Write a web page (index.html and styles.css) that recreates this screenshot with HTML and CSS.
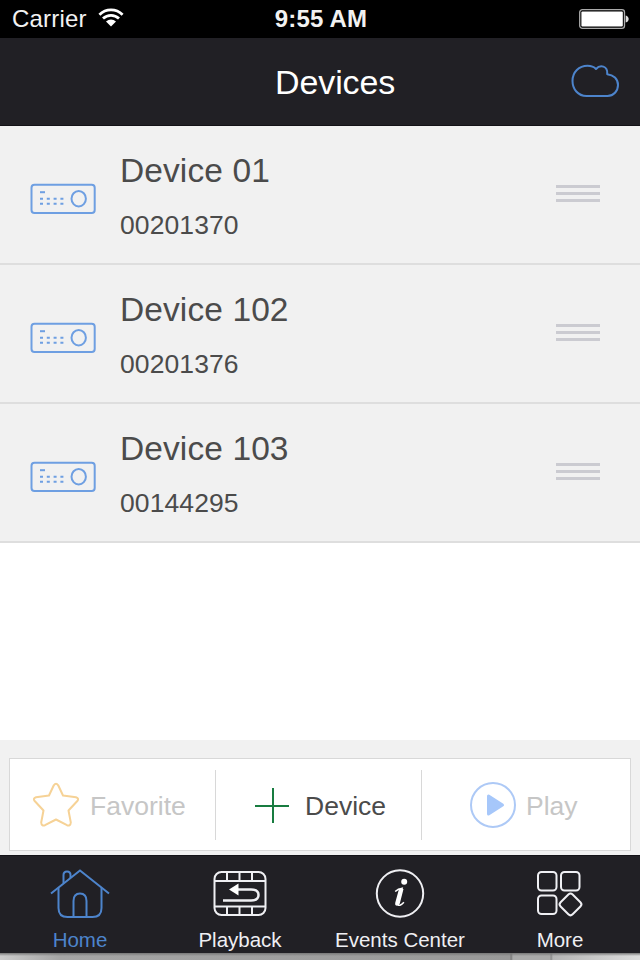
FILE: index.html
```html
<!DOCTYPE html>
<html lang="en">
<head>
    <meta charset="UTF-8">
    <meta name="viewport" content="width=device-width, initial-scale=1.0">
    <title>Devices</title>
    <link rel="stylesheet" href="styles.css">
</head>
<body>
    <!-- shared icons -->
    <svg class="symbols" width="0" height="0">
        <symbol id="dvr" viewBox="0 0 66 32">
            <g fill="none" stroke="#6e9fe2" stroke-width="2">
                <rect x="1.5" y="1.700" width="63.200" height="28.200" rx="3"/>
                <ellipse cx="48.700" cy="15.700" rx="7.200" ry="7.700"/>
                <path d="M10 9.200h5"/>
                <path d="M10 15.700h24M10 20.800h24" stroke-dasharray="3 3.800"/>
            </g>
        </symbol>
    </svg>

    <div class="app">
        <div class="status-bar">
            <div class="carrier">
                <span>Carrier</span>
                <svg class="wifi" width="26" height="20" viewBox="0 0 26 20">
                    <g fill="none" stroke="#fff" stroke-width="2.800">
                        <path d="M1.400 6.700C8 .3 18 .3 24.600 6.700"/>
                        <path d="M5 10.600c4.600-4.400 11.400-4.400 16 0"/>
                    </g>
                    <path d="M8 13.500c3-2.700 7-2.700 10 0l-5 5z" fill="#fff"/>
                </svg>
            </div>
            <div class="clock">9:55 AM</div>
            <svg class="battery" width="51" height="21" viewBox="0 0 51 21">
                <rect x=".7" y=".7" width="44.800" height="18.600" rx="2.600" fill="none" stroke="#aaa" stroke-width="1.300"/>
                <rect x="2.400" y="2.400" width="41.400" height="15.200" rx="1" fill="#fff"/>
                <path d="M46.700 6.500c4 1 4 6 0 7z" fill="#ddd"/>
            </svg>
        </div>

        <div class="nav-bar">
            <h1>Devices</h1>
            <svg class="cloud" width="48" height="34" viewBox="0 0 48 34">
                <path d="M15.500 32C7 32 1.500 25 1.500 17 1.500 8 8 1.800 16.500 1.800c3.500 0 6.500 1 8.500 3.200C29 .5 37 1.500 36.200 10.200 42.500 10.800 47 15 47 21c0 6-4.500 11-10.500 11z" fill="none" stroke="#4d84cc" stroke-width="2" stroke-linejoin="round"/>
            </svg>
        </div>

        <div class="device-list">
            <div class="device">
                <svg class="device-icon" width="66" height="32"><use href="#dvr"/></svg>
                <div class="device-info">
                    <div class="device-name">Device 01</div>
                    <div class="device-id">00201370</div>
                </div>
                <div class="handle"><i></i><i></i><i></i></div>
            </div>
            <div class="device">
                <svg class="device-icon" width="66" height="32"><use href="#dvr"/></svg>
                <div class="device-info">
                    <div class="device-name">Device 102</div>
                    <div class="device-id">00201376</div>
                </div>
                <div class="handle"><i></i><i></i><i></i></div>
            </div>
            <div class="device">
                <svg class="device-icon" width="66" height="32"><use href="#dvr"/></svg>
                <div class="device-info">
                    <div class="device-name">Device 103</div>
                    <div class="device-id">00144295</div>
                </div>
                <div class="handle"><i></i><i></i><i></i></div>
            </div>
        </div>

        <div class="toolbar">
            <div class="actions">
                <div class="action favorite">
                    <svg width="48" height="46" viewBox="0 0 48 46">
                        <path d="M21.800 3.300Q24 .2 26.200 3.300L31 13.500 44 15.200Q47.500 16.300 45.300 19L36.500 28.500 38.800 40.500Q38.500 44.300 35 43.200L24 37.500 13 43.200Q9.500 44.300 9.200 40.500L11.500 28.500 2.700 19Q.5 16.300 4 15.200L17 13.500z" fill="none" stroke="#f6d296" stroke-width="2" stroke-linejoin="round"/>
                    </svg>
                    <span>Favorite</span>
                </div>
                <div class="action add">
                    <svg width="34" height="36" viewBox="0 0 34 36">
                        <path d="M0 19h34M18 1v35" stroke="#187c40" stroke-width="2"/>
                    </svg>
                    <span>Device</span>
                </div>
                <div class="action play">
                    <svg width="46" height="46" viewBox="0 0 46 46">
                        <circle cx="23" cy="23" r="22" fill="none" stroke="#adc9f6" stroke-width="2"/>
                        <path d="M18.500 14v18L32.500 23z" fill="#a6c7fa" stroke="#a6c7fa" stroke-width="3" stroke-linejoin="round"/>
                    </svg>
                    <span>Play</span>
                </div>
            </div>
        </div>

        <div class="tab-bar">
            <div class="tab active">
                <svg width="60" height="52" viewBox="0 0 60 52">
                    <g fill="none" stroke="#4d84cc" stroke-width="2">
                        <path d="M1 26.500L30 3.500l29 23"/>
                        <path d="M8.500 21v20q0 9 9 9h25q9 0 9-9V21"/>
                        <path d="M13.500 16V8q0-3.500 3.500-3.500T20.500 8v3"/>
                        <path d="M23.500 50V34q0-7.500 6.500-7.500T36.500 34v16"/>
                    </g>
                </svg>
                <span>Home</span>
            </div>
            <div class="tab">
                <svg width="54" height="52" viewBox="0 0 54 52">
                    <g fill="none" stroke="#efeff3" stroke-width="2">
                        <rect x="1.500" y="5" width="51" height="43" rx="7"/>
                        <path d="M2 14h50M2 39.500h50M14 5v9M26.500 5v9M39 5v9M14 39.500V48M26.500 39.500V48M39 39.500V48"/>
                        <path d="M24 22.500h14q7.500 0 7.500 5.500t-7.500 5.500H10" stroke-width="2.500"/>
                    </g>
                    <path d="M16 22.500l9.500-6v12z" fill="#fff"/>
                </svg>
                <span>Playback</span>
            </div>
            <div class="tab">
                <svg width="50" height="52" viewBox="0 0 50 52">
                    <circle cx="25" cy="26.500" r="23.200" fill="none" stroke="#efeff3" stroke-width="2"/>
                    <circle cx="29.200" cy="14.800" r="3" fill="#fff"/>
                    <path d="M20.200 24.500q3-3 7-3.300l-3.800 14.600q-.8 3.200 1.500 2.400 2-.7 4-3" fill="none" stroke="#fff" stroke-width="1.500"/>
                    <path d="M24 22h4.500L24.800 36.500q-.5 2.300-2.700 2.300-2.500 0-1.800-3.300z" fill="#fff"/>
                </svg>
                <span>Events Center</span>
            </div>
            <div class="tab">
                <svg width="48" height="52" viewBox="0 0 48 52">
                    <g fill="none" stroke="#efeff3" stroke-width="2">
                        <rect x="2" y="5" width="18.500" height="18.500" rx="3.500"/>
                        <rect x="25" y="5" width="18.500" height="18.500" rx="3.500"/>
                        <rect x="2" y="28.500" width="18.500" height="18.500" rx="3.500"/>
                        <rect x="26" y="28.900" width="17" height="17" rx="3" transform="rotate(45 34.500 37.400)"/>
                    </g>
                </svg>
                <span>More</span>
            </div>
        </div>
        <div class="bottom-strip"></div>
    </div>
</body>
</html>
```
FILE: styles.css
```css
* {
    box-sizing: border-box;
}
body {
    margin: 0;
    font-family: "Liberation Sans", Arial, sans-serif;
    background-color: #fff;
}
.symbols {
    position: absolute;
}
.app {
    width: 640px;
    height: 960px;
    display: flex;
    flex-direction: column;
    overflow: hidden;
}
.app svg {
    display: block;
    flex-shrink: 0;
}
.status-bar {
    height: 38px;
    display: grid;
    grid-template-columns: 1fr auto 1fr;
    align-items: center;
    padding: 0 10px 0 12px;
    background-color: #000;
    color: #f2f2f2;
    font-size: 24px;
    line-height: 38px;
}
.carrier {
    display: flex;
    align-items: center;
    gap: 11px;
    letter-spacing: 0.2px;
}
.wifi {
    margin-bottom: 2px;
}
.clock {
    font-weight: bold;
    letter-spacing: 0.2px;
}
.battery {
    justify-self: end;
}
.nav-bar {
    height: 88px;
    display: flex;
    align-items: center;
    padding: 0 21px 0 275px;
    background-color: #212025;
    border-bottom: 1px solid #131217;
    color: #fff;
}
.nav-bar h1 {
    margin: 0;
    font-size: 34px;
    font-weight: normal;
    line-height: 40px;
    letter-spacing: -0.1px;
}
.cloud {
    margin-left: auto;
    margin-bottom: 2px;
}
.device-list {
    height: 417px;
    display: grid;
    grid-template-rows: repeat(3, 139px);
    color: #4b4b4b;
}
.device {
    display: flex;
    align-items: flex-start;
    padding-right: 40px;
    padding-left: 30px;
    background-color: #f1f1f1;
    border-bottom: 2px solid #dedede;
}
.device-icon {
    margin-top: 57px;
}
.device-info {
    flex-grow: 1;
    margin-left: 24px;
    padding-top: 26px;
}
.device-name {
    font-size: 33.5px;
    line-height: 38px;
    letter-spacing: 0.1px;
}
.device-id {
    margin-top: 19px;
    font-size: 26.5px;
    line-height: 32px;
    letter-spacing: 0.1px;
}
.handle {
    display: flex;
    flex-direction: column;
    gap: 4px;
    margin-top: 59px;
}
.handle i {
    width: 44px;
    height: 3px;
    background-color: #cbcbd1;
}
.toolbar {
    height: 115px;
    margin-top: auto;
    padding: 18px 9px 4px;
    background-color: #f1f1f1;
}
.actions {
    height: 93px;
    display: grid;
    grid-template-columns: 206px 206px 1fr;
    align-items: center;
    background-color: #fff;
    border: 1px solid #d8d8d8;
}
.action {
    height: 70px;
    display: flex;
    align-items: center;
    border-right: 1px solid #d8d8d8;
    font-size: 26.5px;
}
.action span {
    padding-top: 4px;
}
.favorite {
    padding-left: 22px;
    gap: 10px;
    color: #c6c6c6;
}
.add {
    padding-left: 39px;
    gap: 16px;
    color: #4b4b4b;
}
.play {
    padding-left: 48px;
    gap: 10px;
    border-right: none;
    color: #c6c6c6;
}
.tab-bar {
    height: 98px;
    display: grid;
    grid-template-columns: repeat(4, 1fr);
    background-color: #212025;
    border-top: 1px solid #131217;
    color: #efeff3;
    font-size: 20.5px;
    line-height: 24px;
}
.tab {
    display: flex;
    flex-direction: column;
    align-items: center;
    padding-top: 11px;
}
.tab span {
    margin-top: 9px;
}
.active {
    color: #4d84cc;
}
.bottom-strip {
    height: 7px;
    background: linear-gradient(#777, transparent 3px), linear-gradient(90deg, #ccc, #a5a5a5 60px, #999 510px, #777 511px, #aaa 513px, #aaa 550px, #888 551px, #b5b5b5 553px, #ddd);
}
```
